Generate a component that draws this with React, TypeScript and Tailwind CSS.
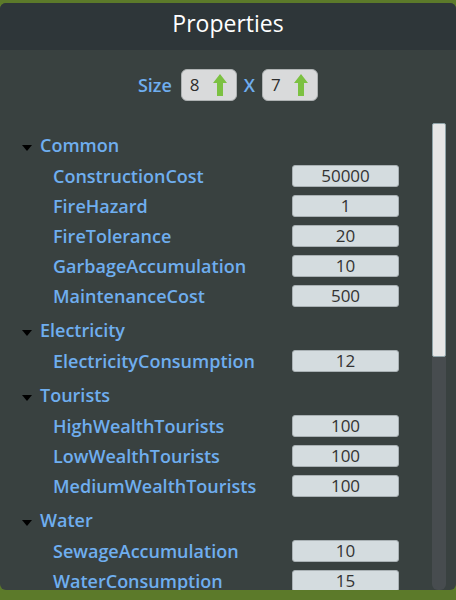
import React from 'react';

type Group = { name: string; items: [string, string][] };

const groups: Group[] = [
  {
    name: 'Common',
    items: [
      ['ConstructionCost', '50000'],
      ['FireHazard', '1'],
      ['FireTolerance', '20'],
      ['GarbageAccumulation', '10'],
      ['MaintenanceCost', '500'],
    ],
  },
  { name: 'Electricity', items: [['ElectricityConsumption', '12']] },
  {
    name: 'Tourists',
    items: [
      ['HighWealthTourists', '100'],
      ['LowWealthTourists', '100'],
      ['MediumWealthTourists', '100'],
    ],
  },
  {
    name: 'Water',
    items: [
      ['SewageAccumulation', '10'],
      ['WaterConsumption', '15'],
    ],
  },
];

function UpArrow() {
  return (
    <svg width="16" height="24" viewBox="0 0 16 24">
      <path d="M8 1 L15 10 L11 10 L11 23 L5 23 L5 10 L1 10 Z" fill="#7cc142" />
    </svg>
  );
}

function SizeBox({ value }: { value: string }) {
  return (
    <div className="flex h-[32px] w-[56px] items-center justify-between rounded-[6px] border border-[#aeb2b3] bg-[#d9dadb] pl-[8px] pr-[8px] text-[17px] font-normal text-[#2e2e2e]">
      <span>{value}</span>
      <UpArrow />
    </div>
  );
}

export default function App() {
  return (
    <div
      className="flex h-[600px] w-[456px] flex-col bg-[#5c7a2a] pt-[3px] pb-[10px]"
      style={{ fontFamily: '"Open Sans", "Noto Sans", sans-serif' }}
    >
      <div className="flex min-h-0 flex-1 flex-col overflow-hidden rounded-[6px] bg-[#394140]">
        <div className="flex h-[47px] shrink-0 items-center justify-center bg-[#2e3639] pb-[6px] text-[23px] text-white">
          Properties
        </div>
        <div className="flex h-[70px] shrink-0 items-center justify-center gap-[7px] font-semibold">
          <span className="mr-[2px] text-[18px] text-[#6faeef]">Size</span>
          <SizeBox value="8" />
          <span className="text-[18px] text-[#6faeef]">X</span>
          <SizeBox value="7" />
        </div>
        <div className="flex min-h-0 flex-1">
          <div className="flex-1 pl-[22px] pt-[9px]">
            {groups.map((g, gi) => (
              <div key={g.name} className={gi > 0 ? 'mt-[3px]' : ''}>
                <div className="flex h-[32px] items-center gap-[8px]">
                  <svg width="10" height="6" viewBox="0 0 10 6" className="mt-[5px]">
                    <path d="M0 0 L10 0 L5 6 Z" fill="#000" />
                  </svg>
                  <span className="text-[18px] font-semibold text-[#6faeef]">{g.name}</span>
                </div>
                {g.items.map(([label, val]) => (
                  <div key={label} className="flex h-[30px] items-center">
                    <span className="w-[270px] pl-[31px] text-[18px] font-semibold text-[#6faeef]">{label}</span>
                    <div className="flex h-[22px] w-[107px] items-center justify-center rounded-[3px] border border-[#a9b1b4] bg-[#d4dcdf] text-[17px] text-[#333]">
                      {val}
                    </div>
                  </div>
                ))}
              </div>
            ))}
          </div>
          <div className="mr-[10px] flex w-[14px] flex-col">
            <div className="mt-[3px] h-[234px] rounded-[2px] border border-[#8fa3a8] bg-[#e6e6e6]" />
            <div className="flex-1 rounded-b-[6px] bg-[#474c4f]" />
          </div>
        </div>
      </div>
    </div>
  );
}
